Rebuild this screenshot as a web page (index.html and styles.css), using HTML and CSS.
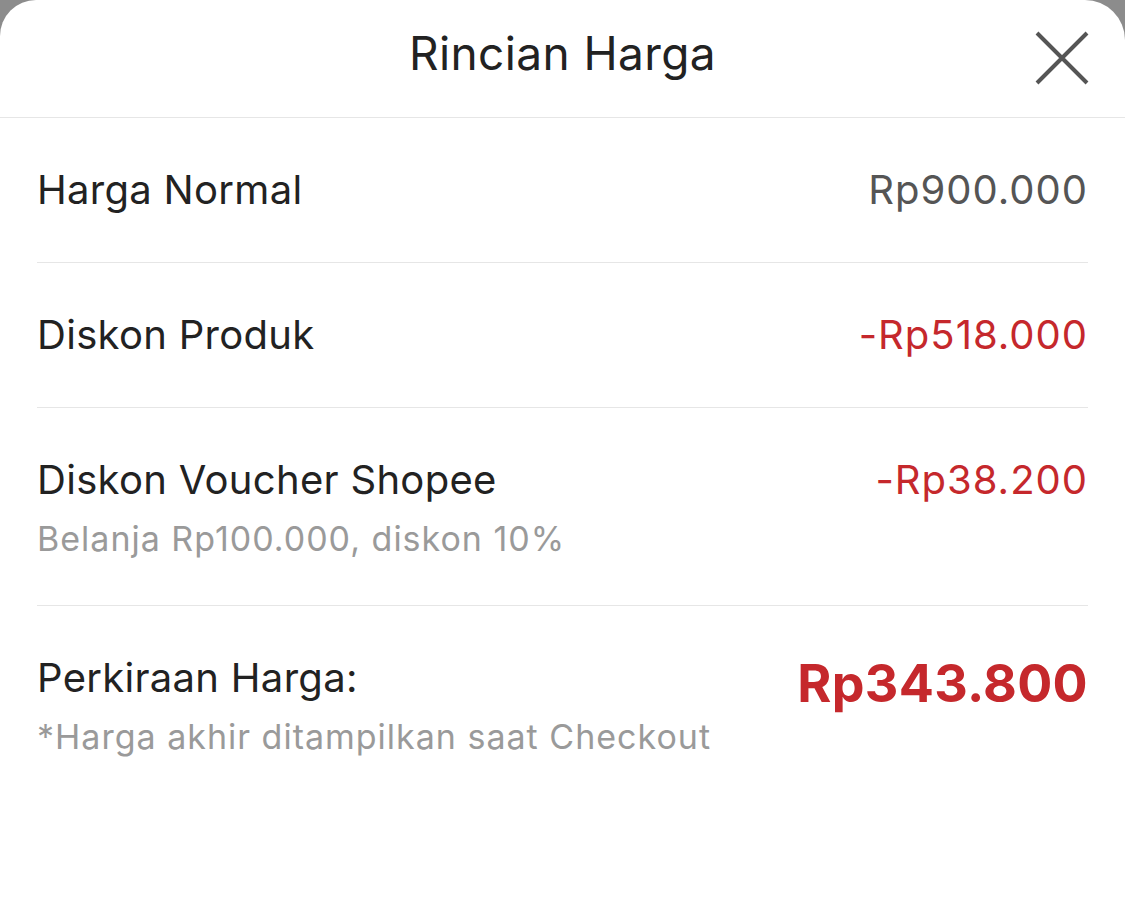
FILE: index.html
```html
<html>
	<head>
		<link rel="stylesheet" href="styles.css">
	</head>
	<body>
		<div class="sheet">
			<div class="header">
				<div class="title">Rincian Harga</div>
				<div class="close">
					<svg width="56" height="56" viewBox="0 0 56 56">
						<path d="M3 3 L53 53 M53 3 L3 53" stroke="#555555" stroke-width="4" fill="none"/>
					</svg>
				</div>
			</div>
			<div class="rows">
				<div class="row">
					<div class="left">
						<div class="label">Harga Normal</div>
					</div>
					<div class="price">Rp900.000</div>
				</div>
				<div class="row">
					<div class="left">
						<div class="label">Diskon Produk</div>
					</div>
					<div class="price red">-Rp518.000</div>
				</div>
				<div class="row with-sub">
					<div class="left">
						<div class="label">Diskon Voucher Shopee</div>
						<div class="sub">Belanja Rp100.000, diskon 10%</div>
					</div>
					<div class="price red">-Rp38.200</div>
				</div>
				<div class="row with-sub total">
					<div class="left">
						<div class="label">Perkiraan Harga:</div>
						<div class="sub">*Harga akhir ditampilkan saat Checkout</div>
					</div>
					<div class="price red big">Rp343.800</div>
				</div>
			</div>
		</div>
	</body>
</html>
```
FILE: styles.css
```css
html, body {
	margin: 0;
	padding: 0;
	height: 100%;
	background-color: #8c8c8c;
	font-family: "Inter", "Noto Sans", sans-serif;
	color: #222222;
}
.sheet {
	background-color: #ffffff;
	height: 100%;
	border-radius: 36px 40px 0 0;
}
.header {
	position: relative;
	height: 117px;
	border-bottom: 1px solid #e6e6e6;
	display: flex;
	align-items: center;
	justify-content: center;
}
.title {
	font-size: 46px;
	letter-spacing: 0.4px;
	color: #222222;
	margin-top: -12px;
}
.close {
	position: absolute;
	right: 35px;
	top: 30px;
	width: 56px;
	height: 56px;
}
.rows {
	padding: 0 37px;
}
.row {
	display: flex;
	justify-content: space-between;
	align-items: flex-start;
	padding: 48px 0 48px 0;
	border-bottom: 1px solid #e6e6e6;
}
.with-sub {
	padding-bottom: 44px;
}
.total {
	border-bottom: none;
}
.label {
	font-size: 40px;
	letter-spacing: 0.3px;
	line-height: 48px;
}
.sub {
	font-size: 34px;
	letter-spacing: 1px;
	line-height: 44px;
	color: #9a9a9a;
	margin-top: 13px;
}
.price {
	font-size: 40px;
	letter-spacing: 1px;
	line-height: 48px;
	color: #555555;
}
.red {
	color: #c5282c;
}
.big {
	font-size: 52px;
	letter-spacing: 0.3px;
	font-weight: bold;
	margin-top: 6px;
}
```
